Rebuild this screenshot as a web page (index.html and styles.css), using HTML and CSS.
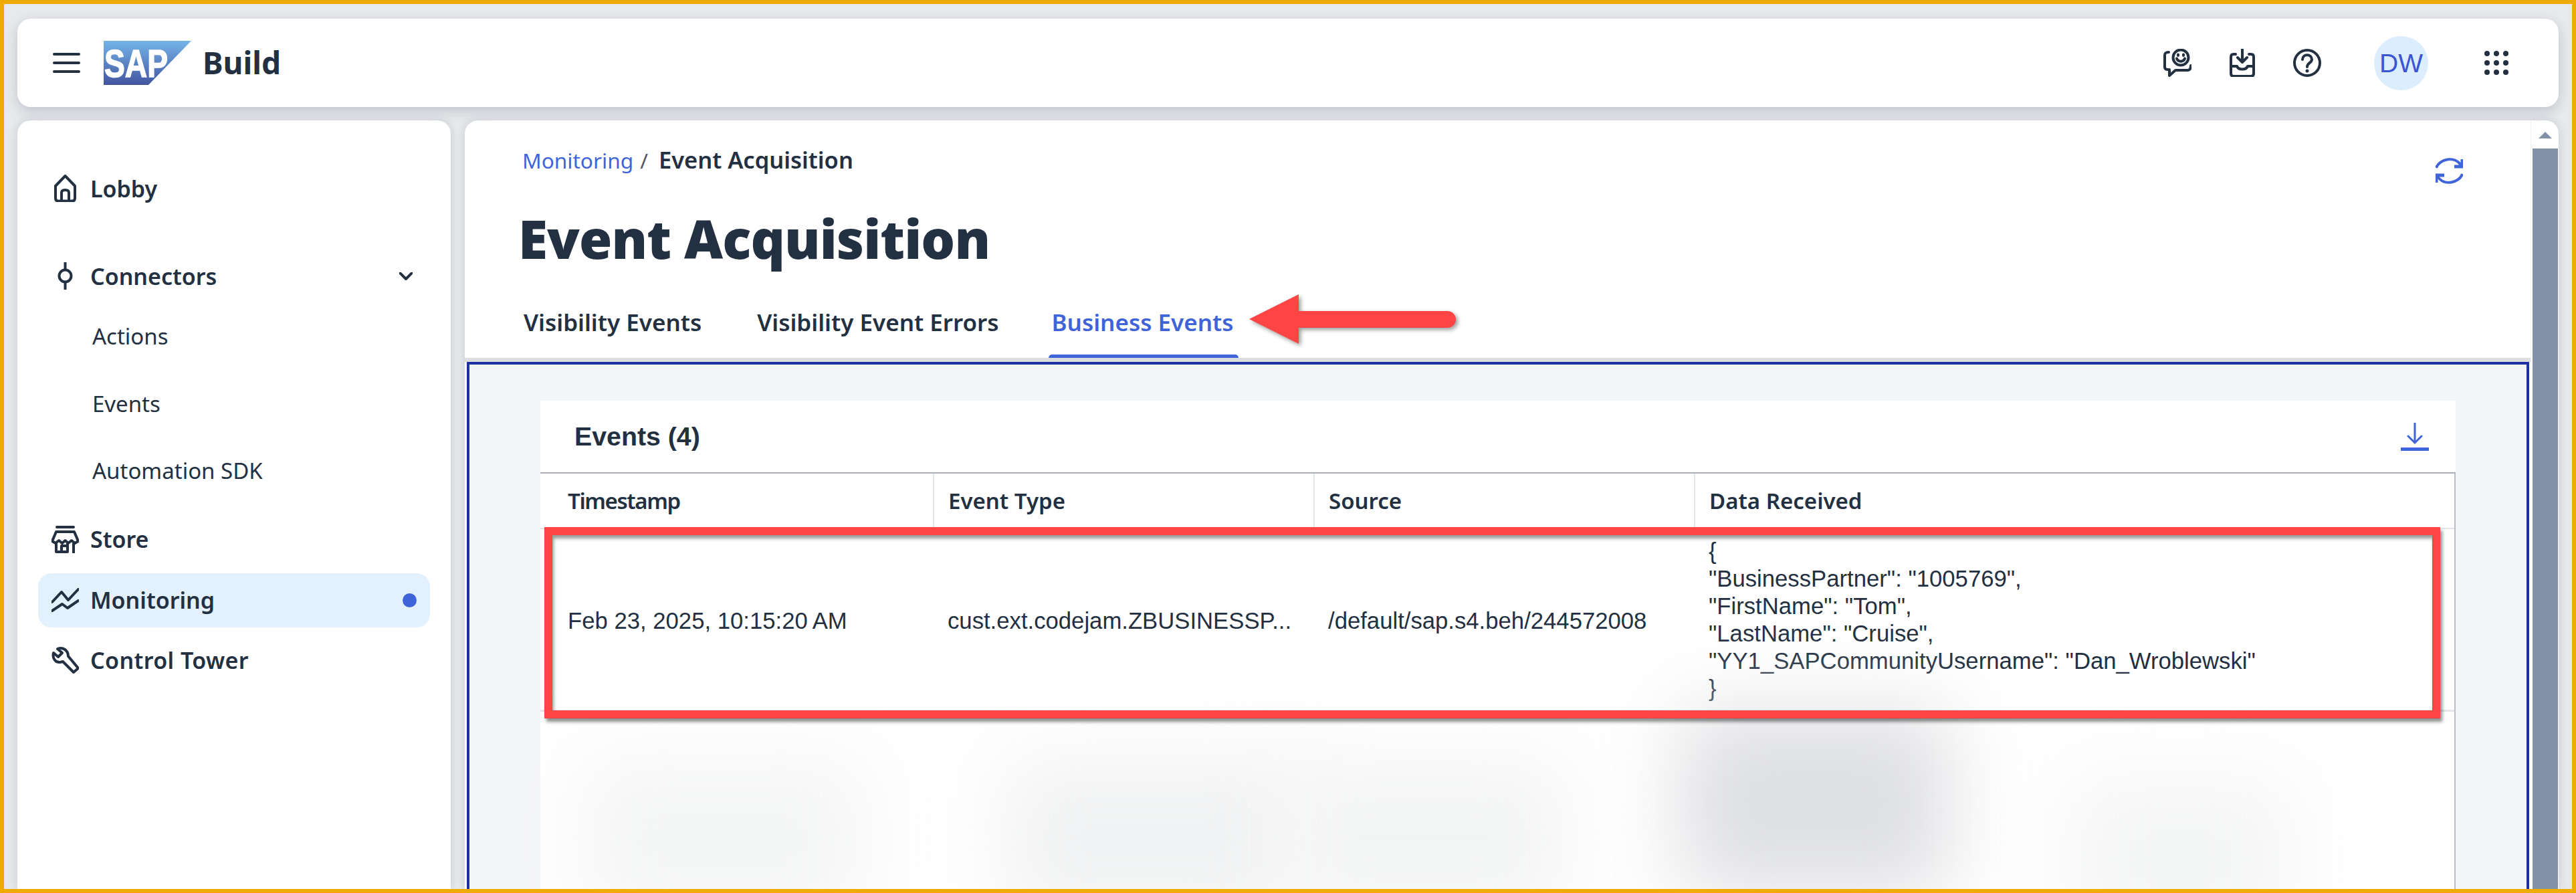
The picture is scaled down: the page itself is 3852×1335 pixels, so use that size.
FILE: index.html
```html
<!DOCTYPE html>
<html lang="en">
<head>
    <meta charset="UTF-8">
    <title>Event Acquisition - SAP Build</title>
    <link rel="stylesheet" href="styles.css">
</head>
<body>
    <header class="topbar">
        <svg class="burger" width="41" height="32" viewBox="0 0 41 32"><path d="M2 3H39M2 16H39M2 29H39"/></svg>
        <svg class="sap-logo" width="131" height="66" viewBox="0 0 131 66">
            <defs><linearGradient id="sapfill" x1="0" y1="0" x2="0" y2="1"><stop offset="0" stop-color="#74b5e9"/><stop offset="1" stop-color="#4355a0"/></linearGradient></defs>
            <polygon points="0,0 131,0 67,66 0,66" fill="url(#sapfill)"/>
            <text x="1" y="54" font-family="Liberation Sans" font-weight="700" font-size="58" fill="#fff" stroke="#fff" stroke-width="1.5" textLength="95" lengthAdjust="spacingAndGlyphs">SAP</text>
        </svg>
        <span class="product">Build</span>
        <div class="top-actions">
            <svg class="ico" width="42" height="42" viewBox="0 0 42 42"><path d="M8 5C3 5 2 7 2 10V27C2 30 4 31 7 31H9V40L18 32H36C40 32 41 29 41 25"/><circle cx="26" cy="13" r="11.5"/><path d="M20 14.500C22 20 30 20 32 14.500"/><path d="M22 8.500V10M30 8.500V10"/></svg>
            <svg class="ico" width="38" height="42" viewBox="0 0 38 42"><path d="M19 1V19M12 13L19 20L26 13"/><path d="M9 8H6C3.500 8 2 9.500 2 12V37C2 39.500 3.500 41 6 41H32C34.500 41 36 39.500 36 37V12C36 9.500 34.500 8 32 8H29"/><path d="M2 26H11C13 32 25 32 27 26H36"/></svg>
            <svg class="ico" width="42" height="42" viewBox="0 0 42 42"><circle cx="21" cy="21" r="19"/><path d="M14 16C14 7 28 7 28 16C28 21 21 21 21 27"/><circle class="solid" cx="21" cy="33" r="2.500"/></svg>
            <span class="avatar">DW</span>
            <svg class="grid-ico" width="36" height="36" viewBox="0 0 36 36"><circle cx="4" cy="4" r="4"/><circle cx="18" cy="4" r="4"/><circle cx="32" cy="4" r="4"/><circle cx="4" cy="18" r="4"/><circle cx="18" cy="18" r="4"/><circle cx="32" cy="18" r="4"/><circle cx="4" cy="32" r="4"/><circle cx="18" cy="32" r="4"/><circle cx="32" cy="32" r="4"/></svg>
        </div>
    </header>

    <div class="workspace">
        <nav class="sidebar">
            <a class="nav-item nav-lobby">
                <svg class="ico nav-ico" width="41" height="41" viewBox="0 0 41 41"><path d="M20.500 2L6 17V35C6 38 7.500 39.500 10 39.500H31C33.500 39.500 35 38 35 35V17Z"/><path d="M15 39V27C15 24.500 17 23 20.500 23C24 23 26 24.500 26 27V39"/></svg>
                <span>Lobby</span>
            </a>
            <a class="nav-item nav-connectors">
                <svg class="ico nav-ico" width="41" height="41" viewBox="0 0 41 41"><path d="M20.500 1V11M20.500 30V40"/><circle cx="20.500" cy="20.500" r="9"/></svg>
                <span>Connectors</span>
                <svg class="ico chevron" width="20" height="12" viewBox="0 0 20 12"><path d="M1 1L10 10L19 1"/></svg>
            </a>
            <a class="sub-item">Actions</a>
            <a class="sub-item">Events</a>
            <a class="sub-item">Automation SDK</a>
            <a class="nav-item nav-store">
                <svg class="ico nav-ico" width="41" height="41" viewBox="0 0 41 41"><path d="M8 2H33"/><path d="M7 9H34L40 23L35 26L30 22L25 26L20.500 22L16 26L11 22L6 26L1 23Z"/><path d="M7 27V39H24V27M15 39V30H24M33 27V40"/></svg>
                <span>Store</span>
            </a>
            <a class="nav-item nav-active">
                <svg class="ico nav-ico" width="41" height="36" viewBox="0 0 41 36"><path d="M1 21L15 6L25 18L40 2"/><path d="M1 34L16 24L24 30L40 19"/></svg>
                <span>Monitoring</span>
                <span class="nav-dot"></span>
            </a>
            <a class="nav-item nav-tower">
                <svg class="ico nav-ico" width="41" height="40" viewBox="0 0 41 40"><path d="M9 3L16 9L10 15L3 9C1 17 6 24 13 23L17 22L33 38L40 32L25 14C25 5 17 0 9 3Z"/></svg>
                <span>Control Tower</span>
            </a>
        </nav>

        <main class="panel">
            <div class="panel-body">
                <div class="page-head">
                    <div class="crumb-row">
                        <div class="crumbs"><a>Monitoring</a><i>/</i><b>Event Acquisition</b></div>
                        <svg class="refresh" width="41" height="41" viewBox="0 0 41 41"><path d="M1 16C5 3 28 -3 38 12"/><path d="M40 3V14H28" class="fat"/><path d="M40 25C36 38 13 44 3 29"/><path d="M1 38V27H13" class="fat"/></svg>
                    </div>
                    <h1>Event Acquisition</h1>
                    <div class="tabs">
                        <a class="tab">Visibility Events</a>
                        <a class="tab">Visibility Event Errors</a>
                        <a class="tab tab-on">Business Events</a>
                        <svg class="call-arrow" width="309" height="74" viewBox="0 0 309 74"><path d="M0 37L74 0V25H296.500A12.500 12.500 0 0 1 296.500 50H74V74Z"/></svg>
                    </div>
                </div>

                <section class="frame">
                    <div class="card">
                        <div class="card-head">
                            <h2>Events (4)</h2>
                            <svg class="download" width="42" height="42" viewBox="0 0 42 42"><path d="M21 1V30M11 20L21 30L31 20"/><path d="M1 39.500H41" class="fat"/></svg>
                        </div>
                        <table class="events">
                            <colgroup><col class="c1"><col class="c2"><col class="c2"><col></colgroup>
                            <thead>
                                <tr><th>Timestamp</th><th>Event Type</th><th>Source</th><th>Data Received</th></tr>
                            </thead>
                            <tbody>
                                <tr class="row-main">
                                    <td>Feb 23, 2025, 10:15:20&#8239;AM</td>
                                    <td>cust.ext.codejam.ZBUSINESSP...</td>
                                    <td>/default/sap.s4.beh/244572008</td>
                                    <td class="json">{<br>"BusinessPartner": "1005769",<br>"FirstName": "Tom",<br>"LastName": "Cruise",<br>"YY1_SAPCommunityUsername": "Dan_Wroblewski"<br>}</td>
                                </tr>
                                <tr class="row-blur">
                                    <td><div class="smear s1"></div></td>
                                    <td><div class="smear s2"></div></td>
                                    <td><div class="smear s3"></div></td>
                                    <td><div class="smear-pair"><div class="smear s4"></div><div class="smear s5"></div></div></td>
                                </tr>
                            </tbody>
                        </table>
                        <div class="red-box"></div>
                    </div>
                </section>
            </div>
            <div class="scrollbar">
                <span class="scroll-up"></span>
                <span class="scroll-thumb"></span>
            </div>
        </main>
    </div>
</body>
</html>
```

FILE: styles.css
```css
* {
    box-sizing: border-box;
}
html, body {
    height: 100%;
    margin: 0;
}
body {
    display: flex;
    flex-direction: column;
    gap: 20px;
    padding: 22px 20px 0;
    border: 6px solid #f0ab00;
    background: #e7e9ec;
    overflow: hidden;
    color: #223041;
    font-family: "Noto Sans", sans-serif;
}
svg {
    display: block;
    flex: none;
}
.ico path, .ico circle, .burger path {
    fill: none;
    stroke: #223041;
    stroke-width: 4;
    stroke-linecap: round;
    stroke-linejoin: round;
}
.ico circle.solid {
    fill: #223041;
    stroke: none;
}

/* top bar */
.topbar {
    flex: none;
    display: flex;
    align-items: center;
    height: 132px;
    padding: 0 53px;
    background: #fff;
    border-radius: 20px;
    box-shadow: 0 6px 18px rgba(40, 50, 70, .2);
}
.burger {
    margin-right: 35px;
}
.sap-logo {
    margin-right: 17px;
}
.product {
    font-size: 46px;
    font-weight: 700;
    line-height: 1;
    margin-top: -2px;
}
.top-actions {
    margin-left: auto;
    display: flex;
    align-items: center;
}
.top-actions .ico:nth-child(1) {
    margin-right: 57px;
}
.top-actions .ico:nth-child(2) {
    margin-right: 57px;
}
.top-actions .ico:nth-child(3) {
    margin-right: 79px;
}
.avatar {
    width: 81px;
    height: 81px;
    border-radius: 50%;
    background: #dcedfe;
    color: #3b55d4;
    font: 39px/81px "Liberation Sans", sans-serif;
    text-align: center;
    margin-right: 84px;
}
.grid-ico {
    fill: #223041;
    margin-right: 22px;
}

/* left nav + main panel */
.workspace {
    flex: 1;
    min-height: 0;
    display: flex;
    gap: 21px;
}
.sidebar {
    flex: none;
    width: 648px;
    background: #fff;
    border-radius: 20px 20px 0 0;
    box-shadow: 0 0 14px rgba(40, 50, 70, .16);
    padding: 68px 31px 0;
}
.nav-item {
    display: flex;
    align-items: center;
    height: 67px;
    padding: 0 20px;
    font-size: 34px;
    font-weight: 600;
    border-radius: 20px;
}
.nav-ico {
    margin-right: 17px;
}
.nav-lobby {
    margin-bottom: 64px;
}
.nav-connectors {
    margin-bottom: 7px;
}
.nav-store {
    margin-top: 18px;
    margin-bottom: 17px;
}
.nav-tower {
    margin-top: 16px;
    letter-spacing: .4px;
}
.nav-active {
    height: 81px;
    background: #e3f1fe;
}
.chevron {
    margin-left: auto;
    margin-right: 6px;
}
.nav-dot {
    width: 21px;
    height: 21px;
    border-radius: 50%;
    background: #3f64da;
    margin-left: auto;
}
.sub-item {
    display: block;
    height: 100.500px;
    padding-left: 81px;
    font-size: 33px;
    line-height: 100px;
}

.panel {
    flex: 1;
    min-width: 0;
    display: flex;
    background: #fff;
    border-radius: 20px 20px 0 0;
    box-shadow: 0 0 14px rgba(40, 50, 70, .16);
    overflow: hidden;
}
.panel-body {
    flex: 1;
    min-width: 0;
    display: flex;
    flex-direction: column;
}
.page-head {
    flex: none;
    height: 361px;
    padding-left: 88px;
    border-bottom: 6px solid #dcdddf;
}
.crumb-row {
    display: flex;
    justify-content: space-between;
    height: 128px;
    padding: 37px 101px 0 0;
}
.crumbs {
    font-size: 31.600px;
    line-height: 44px;
    margin-left: -2px;
}
.crumbs a {
    color: #3f64da;
}
.crumbs i {
    font-style: normal;
    margin: 0 16px 0 10px;
    color: #556;
}
.crumbs b {
    font-size: 34.500px;
    font-weight: 600;
}
.refresh {
    margin-top: 18px;
}
.refresh path {
    fill: none;
    stroke: #3f64da;
    stroke-width: 4;
}
.refresh .fat {
    stroke-width: 5;
}
h1 {
    margin: -2px 0 0 -8px;
    font-size: 80px;
    font-weight: 900;
    letter-spacing: -.900px;
    line-height: 100px;
}
.tabs {
    position: relative;
    display: flex;
    gap: 83px;
    margin-top: 41px;
    height: 88px;
}
.tab {
    font-size: 35px;
    font-weight: 600;
    line-height: 70px;
}
.tab-on {
    position: relative;
    color: #3f64da;
    margin-left: -9px;
    padding: 0 8px 0 5px;
}
.tab-on::after {
    content: "";
    position: absolute;
    left: 0;
    right: 0;
    top: 83px;
    height: 5px;
    background: #3f64da;
    border-radius: 5px 5px 0 0;
}
.call-arrow {
    position: absolute;
    left: 1085px;
    top: -7px;
    fill: #ff4444;
    filter: drop-shadow(3px 3px 3px rgba(0, 0, 0, .4));
}

/* business events area */
.frame {
    flex: 1;
    min-height: 0;
    margin: 0 2px 0 3px;
    padding: 54px 106px 0;
    border: 4px solid #1f30a0;
    border-bottom: 0;
    background: #f4f5f7;
    overflow: hidden;
}
.card {
    position: relative;
    height: 100%;
    background: #fff;
    border-right: 2px solid #bcbec4;
}
.card-head {
    display: flex;
    justify-content: space-between;
    align-items: center;
    height: 109px;
    margin-right: -2px;
    padding: 0 40px 0 51px;
    background: #fff;
    border-bottom: 2px solid #a9aeba;
}
h2 {
    margin: 0;
    font: 700 39.300px "Liberation Sans", sans-serif;
}
.download path {
    fill: none;
    stroke: #3f64da;
    stroke-width: 3;
    stroke-linecap: round;
}
.download .fat {
    stroke-width: 5;
}
.events {
    width: 100%;
    table-layout: fixed;
    border-collapse: collapse;
}
.c1 {
    width: 588px;
}
.c2 {
    width: 569px;
}
th {
    height: 82px;
    padding: 0 0 0 21px;
    text-align: left;
    font-size: 33px;
    font-weight: 600;
    border-left: 2px solid #e5e6e8;
    border-bottom: 2px solid #e5e6e8;
}
th:first-child {
    padding-left: 41px;
    border-left: 0;
    letter-spacing: -1.400px;
}
td {
    padding: 0 0 0 21px;
    font: 34.700px/41px "Liberation Sans", sans-serif;
    white-space: nowrap;
}
td:first-child {
    padding-left: 41px;
}
.row-main td {
    height: 272px;
    border-bottom: 3px solid #e5e6e8;
    padding-top: 6px;
}
.row-main .json {
    padding-top: 2px;
}
.row-blur td {
    height: 300px;
    padding: 0;
}
.smear {
    height: 240px;
    margin: 40px 0 0;
    background: #f4f5f5;
    filter: blur(60px);
}
.s1 {
    width: 430px;
    margin-left: 60px;
}
.s2 {
    width: 440px;
    margin-left: 104px;
    background: #f1f2f3;
}
.s3 {
    width: 430px;
    margin-left: -50px;
    background: #f3f4f4;
}
.smear-pair {
    display: flex;
}
.s4 {
    width: 400px;
    height: 270px;
    margin: 0 0 0 -20px;
    background: #dedfe2;
}
.s5 {
    width: 340px;
    margin: 100px 0 0 176px;
}
.red-box {
    position: absolute;
    left: 6px;
    top: 189px;
    width: 2835px;
    height: 286px;
    border: 12px solid #ff4444;
    box-shadow: 3px 5px 5px rgba(0, 0, 0, .45), inset 2px 5px 5px rgba(0, 0, 0, .4);
}

/* fake scrollbar */
.scrollbar {
    flex: none;
    width: 42px;
    padding: 17px 2px 0;
    background: #fff;
    border-left: 1px solid #f0f1f3;
    display: flex;
    flex-direction: column;
    align-items: center;
}
.scroll-up {
    width: 0;
    height: 0;
    border-left: 10px solid transparent;
    border-right: 10px solid transparent;
    border-bottom: 10px solid #8391a8;
    margin-bottom: 15px;
}
.scroll-thumb {
    flex: 1;
    width: 38px;
    background: #8391a8;
}
```
